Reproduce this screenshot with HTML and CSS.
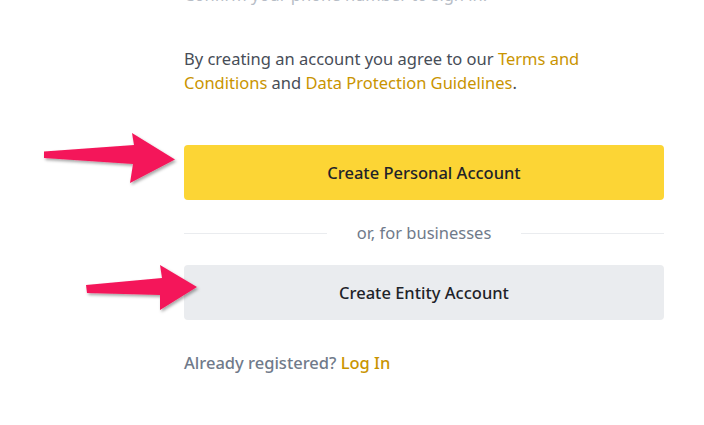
FILE: index.html
```html
<!DOCTYPE html>
<html lang="en">
<head>
<meta charset="utf-8">
<title>Create Account</title>
<link rel="stylesheet" href="styles.css">
</head>
<body>
<main class="page">
  <p class="cut-line">Confirm your phone number to sign in.</p>
  <p class="terms">By creating an account you agree to our <a href="#" class="link">Terms and Conditions</a> and <a href="#" class="link">Data Protection Guidelines</a>.</p>
  <button class="btn btn-primary" type="button">Create Personal Account</button>
  <div class="divider"><span class="divider-line"></span><span class="divider-text">or, for businesses</span><span class="divider-line"></span></div>
  <button class="btn btn-secondary" type="button">Create Entity Account</button>
  <p class="login">Already registered? <a href="#" class="link">Log In</a></p>
</main>
<svg class="arrows" width="704" height="425" viewBox="0 0 704 425" aria-hidden="true">
  <defs>
    <filter id="shadow" x="-20%" y="-40%" width="140%" height="180%">
      <feDropShadow dx="1.5" dy="2" stdDeviation="1.5" flood-color="#000" flood-opacity="0.35"/>
    </filter>
  </defs>
  <polygon filter="url(#shadow)" fill="#F4175A" points="44,151.5 134,145 132,133 175,159.5 130,183 133,164 44,158"/>
  <polygon filter="url(#shadow)" fill="#F4175A" points="86,285 162,278 160,265 197,287 160,310 160,295 87,293"/>
</svg>
</body>
</html>
```

FILE: styles.css
```css
* { box-sizing: border-box; }
html, body { margin: 0; padding: 0; background: #fff; }
body {
  width: 704px;
  height: 425px;
  overflow: hidden;
  font-family: "Noto Sans", "Open Sans", Arial, sans-serif;
  font-size: 16.5px;
  line-height: 24px;
  color: #474D57;
}
.page {
  width: 480px;
  margin-left: 184px;
  display: flex;
  flex-direction: column;
}
.cut-line {
  margin: -17px 0 0;
  color: #B7BDC6;
  white-space: nowrap;
}
.terms {
  margin: 40px 0 0;
  padding-right: 70px;
}
.link {
  color: #C99400;
  text-decoration: none;
}
.btn {
  display: flex;
  align-items: center;
  justify-content: center;
  width: 480px;
  height: 55px;
  border: 0;
  border-radius: 4px;
  font-family: inherit;
  font-size: 16.5px;
  font-weight: 500;
  color: #1E2329;
  padding: 0;
}
.btn-primary {
  margin-top: 50px;
  background: #FCD535;
}
.btn-secondary {
  margin-top: 20px;
  background: #EAECEF;
}
.divider {
  margin-top: 21px;
  display: flex;
  align-items: center;
  gap: 30px;
  height: 24px;
}
.divider-line {
  flex: 1;
  height: 1px;
  background: #EAECEF;
}
.divider-text {
  color: #707A8A;
}
.login {
  margin: 31px 0 0;
  color: #707A8A;
  font-weight: 500;
}
.login .link { font-weight: 500; }
.arrows {
  position: absolute;
  left: 0;
  top: 0;
  pointer-events: none;
}
```
